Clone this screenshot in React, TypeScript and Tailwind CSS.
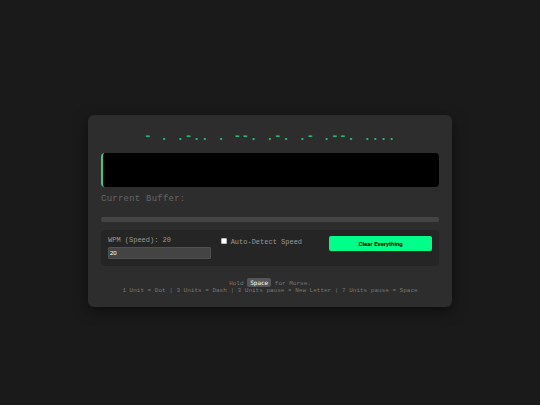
import { useState } from "react";

const MORSE = "- . .-.. . --. .-. .- .--. ....";

const TIMING = [
  "1 Unit = Dot",
  "3 Units = Dash",
  "3 Units pause = New Letter",
  "7 Units pause = Space",
];

function Controls({ onClear }: { onClear: () => void }) {
  const [wpm, setWpm] = useState("20");
  const [auto, setAuto] = useState(false);

  return (
    <div className="mt-2 grid grid-cols-3 items-start gap-2 rounded-[4px] bg-[#252525] px-[7px] pt-[6px] pb-[7px] text-[7px] leading-[8px] text-[#999999]">
      <div className="flex flex-col gap-[3px]">
        <label htmlFor="wpm">WPM (Speed): {wpm}</label>
        <input
          id="wpm"
          type="text"
          inputMode="numeric"
          value={wpm}
          onChange={(e) => setWpm(e.target.value)}
          className="h-[12px] w-full rounded-[1px] border border-[#505050] bg-[#444444] px-px font-['Liberation_Sans',Arial,sans-serif] text-[6px] text-white outline-none"
        />
      </div>
      <div className="flex items-start gap-[4px] pt-px pl-[2px]">
        <input
          id="auto"
          type="checkbox"
          checked={auto}
          onChange={(e) => setAuto(e.target.checked)}
          className="mt-px size-[6px] appearance-none rounded-[1px] border border-[#bbbbbb] bg-white checked:bg-[#00ff88]"
        />
        <label htmlFor="auto" className="whitespace-nowrap pt-px">
          Auto-Detect Speed
        </label>
      </div>
      <button
        type="button"
        onClick={onClear}
        className="h-[15px] rounded-[2px] bg-[#00ff88] font-[Roboto,Arial,sans-serif] text-[6px] font-bold text-black"
      >
        Clear Everything
      </button>
    </div>
  );
}

export default function App() {
  const [message, setMessage] = useState("");

  return (
    <main className="flex min-h-screen flex-col items-center justify-center bg-[#1a1a1a] px-4 pt-[17px] font-['Courier_New','Liberation_Mono',monospace]">
      <section className="w-full max-w-[364px] rounded-[6px] bg-[#2d2d2d] p-[13px] shadow-[0_4px_14px_rgba(0,0,0,0.5)]">
        <h1 className="mt-px mb-[8px] text-center text-[13px] leading-[16px] font-bold tracking-wide text-[#22bb77]">
          {MORSE}
        </h1>
        <div className="min-h-[34px] rounded-[4px] border-l-2 border-[#33cc88] bg-black p-2 text-[12px] text-[#00ff88]">
          {message}
        </div>
        <p className="mt-[7px] text-[9px] leading-[10px] tracking-wide text-[#666666]">
          Current Buffer:
        </p>
        <div className="mt-[13px] h-[5px] rounded-[2px] bg-[#444444]" />
        <Controls onClear={() => setMessage("")} />
        <footer className="mt-[13px] text-center text-[6px] leading-[7px] text-[#777777]">
          <p>
            Hold{" "}
            <kbd className="rounded-[2px] bg-[#555555] px-[3px] py-px font-['DejaVu_Sans_Mono',monospace] text-[6px] text-white">
              Space
            </kbd>{" "}
            for Morse.
          </p>
          <p>{TIMING.join(" | ")}</p>
        </footer>
      </section>
    </main>
  );
}
